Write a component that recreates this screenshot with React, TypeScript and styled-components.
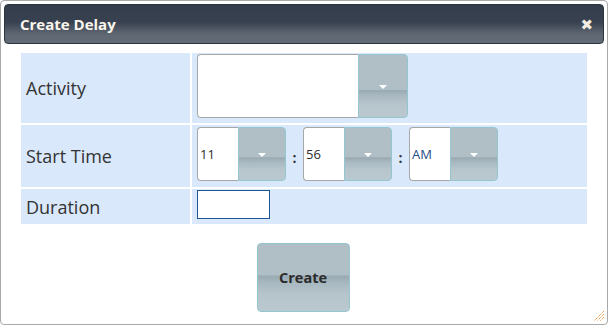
import React from "react";
import styled, { createGlobalStyle } from "styled-components";

const GlobalStyle = createGlobalStyle`
  html, body {
    margin: 0;
    padding: 0;
    background: #ffffff;
  }
  body {
    font-family: "Open Sans", "DejaVu Sans", sans-serif;
  }
`;

const Dialog = styled.div`
  position: relative;
  width: 608px;
  height: 325px;
  box-sizing: border-box;
  border: 1px solid #a9a9a9;
  border-radius: 4px;
  padding: 3px;
  background: #ffffff;
`;

const TitleBar = styled.div`
  height: 40px;
  border-radius: 4px;
  border: 1px solid #2c3542;
  box-sizing: border-box;
  display: flex;
  align-items: center;
  justify-content: space-between;
  padding: 0 10px 0 15px;
  background: linear-gradient(
    to bottom,
    #333d4c 0%,
    #37414f 45%,
    #555d69 68%,
    #606873 80%,
    #626a75 100%
  );

  h1 {
    margin: 0;
    font-size: 15px;
    font-weight: bold;
    color: #fbf6ee;
  }
`;

const CloseButton = styled.span`
  font-size: 15px;
  font-weight: bold;
  color: #f3ece2;
  line-height: 1;
  cursor: pointer;
`;

const Form = styled.div`
  display: grid;
  grid-template-columns: 169px 395px;
  grid-template-rows: 70px 62px 35px;
  gap: 2px;
  margin: 9px 0 0 17px;
`;

const LabelCell = styled.div`
  background: #d9e8fa;
  display: flex;
  align-items: center;
  padding-left: 5px;
  font-size: 18px;
  color: #333333;
`;

const ValueCell = styled.div<{ $top: number }>`
  background: #d9e8fa;
  display: flex;
  align-items: flex-start;
  padding: ${({ $top }) => $top}px 0 0 5px;
`;

const SelectBox = styled.div<{ $field: number; $height: number; $button: number }>`
  display: flex;
  height: ${({ $height }) => $height}px;
  width: ${({ $field, $button }) => $field + $button}px;
`;

const SelectField = styled.div<{ $width: number; $blue?: boolean }>`
  width: ${({ $width }) => $width}px;
  box-sizing: border-box;
  background: #ffffff;
  border: 1px solid #a7a7a7;
  border-right: none;
  border-radius: 4px 0 0 4px;
  display: flex;
  align-items: center;
  padding-left: 2px;
  font-size: 13px;
  color: ${({ $blue }) => ($blue ? "#1f4d86" : "#2b2b2b")};
`;

const DropButton = styled.div<{ $width: number }>`
  width: ${({ $width }) => $width}px;
  box-sizing: border-box;
  border: 1px solid #95c6cf;
  border-radius: 0 4px 4px 0;
  background: linear-gradient(
    to bottom,
    #b0bec6 0%,
    #b0bec6 56%,
    #9aaab3 57%,
    #a9b9c1 66%,
    #b7c6cd 80%,
    #bac9cf 100%
  );
  display: flex;
  align-items: center;
  justify-content: center;
  padding-top: 2px;

  svg {
    display: block;
  }
`;

const Colon = styled.span`
  width: 17px;
  align-self: center;
  text-align: center;
  font-size: 14px;
  font-weight: bold;
  color: #333333;
`;

const DurationInput = styled.input`
  width: 73px;
  height: 29px;
  box-sizing: border-box;
  border: 1px solid #1f5697;
  background: #ffffff;
  margin: 0;
  padding: 0 3px;
  outline: none;
`;

const Footer = styled.div`
  display: flex;
  justify-content: center;
  margin-top: 19px;
  padding-right: 2px;
`;

const CreateButton = styled.button`
  width: 93px;
  height: 69px;
  border: 1px solid #95c6cf;
  border-radius: 4px;
  font-family: "Open Sans", "DejaVu Sans", sans-serif;
  font-size: 14.5px;
  font-weight: bold;
  color: #2b2b2b;
  padding: 0;
  background: linear-gradient(
    to bottom,
    #b0bec6 0%,
    #b0bec6 46%,
    #9aaab3 48%,
    #a8b8c0 58%,
    #b6c5cc 75%,
    #bac9cf 100%
  );
  cursor: pointer;
`;

const Grip = styled.svg`
  position: absolute;
  right: 2px;
  bottom: 2px;
`;

const Arrow = () => (
  <svg width="8" height="4" viewBox="0 0 8 4">
    <path d="M0 0 H8 L4 4 Z" fill="#ffffff" />
  </svg>
);

const Select: React.FC<{
  value?: string;
  field: number;
  button: number;
  height: number;
  blue?: boolean;
}> = ({ value, field, button, height, blue }) => (
  <SelectBox $field={field} $button={button} $height={height}>
    <SelectField $width={field} $blue={blue}>
      {value}
    </SelectField>
    <DropButton $width={button}>
      <Arrow />
    </DropButton>
  </SelectBox>
);

export default function App() {
  return (
    <>
      <GlobalStyle />
      <Dialog>
        <TitleBar>
          <h1>Create Delay</h1>
          <CloseButton>✖</CloseButton>
        </TitleBar>

        <Form>
          <LabelCell>Activity</LabelCell>
          <ValueCell $top={1}>
            <Select field={161} button={50} height={64} />
          </ValueCell>

          <LabelCell>Start Time</LabelCell>
          <ValueCell $top={2}>
            <Select value="11" field={41} button={48} height={54} />
            <Colon>:</Colon>
            <Select value="56" field={41} button={48} height={54} />
            <Colon>:</Colon>
            <Select value="AM" field={41} button={48} height={54} blue />
          </ValueCell>

          <LabelCell>Duration</LabelCell>
          <ValueCell $top={1}>
            <DurationInput type="text" />
          </ValueCell>
        </Form>

        <Footer>
          <CreateButton>Create</CreateButton>
        </Footer>

        <Grip width="12" height="12" viewBox="0 0 12 12">
          <g stroke="#e07a1a" strokeWidth="1" strokeDasharray="1 1">
            <line x1="11" y1="1" x2="1" y2="11" />
            <line x1="11" y1="4" x2="4" y2="11" />
            <line x1="11" y1="7" x2="7" y2="11" />
          </g>
        </Grip>
      </Dialog>
    </>
  );
}
